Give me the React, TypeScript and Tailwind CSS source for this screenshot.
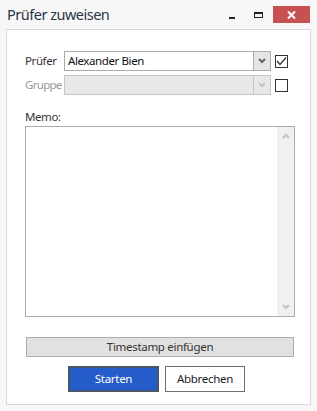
const font = { fontFamily: '"Noto Sans", "Open Sans", sans-serif' }

function Chevron({ up, color }: { up?: boolean; color: string }) {
  return (
    <svg width="8" height="6" viewBox="0 0 8 6" className="block">
      <path
        d={up ? 'M1 5 L4 2 L7 5' : 'M1 1 L4 4 L7 1'}
        stroke={color}
        strokeWidth="2"
        fill="none"
      />
    </svg>
  )
}

function Combo({ value, disabled }: { value?: string; disabled?: boolean }) {
  return (
    <div
      className={`flex h-[20px] w-[207px] border ${
        disabled ? 'border-[#c7c7c7] bg-[#e8e8e8]' : 'border-[#ababab] bg-white'
      }`}
    >
      <div className="flex flex-1 items-center pl-[3px] text-[11.5px] leading-none tracking-[-0.4px] text-[#111]">
        {value}
      </div>
      <div
        className={`flex w-[17px] items-center justify-center border-l ${
          disabled ? 'border-[#c7c7c7] bg-[#e8e8e8]' : 'border-[#ababab] bg-[#e5e5e5]'
        }`}
      >
        <Chevron color={disabled ? '#c4c4c4' : '#666'} />
      </div>
    </div>
  )
}

function CheckBox({ checked }: { checked?: boolean }) {
  return (
    <div className="flex h-[13px] w-[13px] items-center justify-center border border-[#333] bg-white">
      {checked && (
        <svg width="11" height="11" viewBox="0 0 11 11">
          <path d="M1 5 L4 8.5 L10 1.5" stroke="#333" strokeWidth="1.3" fill="none" />
        </svg>
      )}
    </div>
  )
}

export default function App() {
  return (
    <div className="flex h-[411px] w-[317px] flex-col bg-[#f7f7f7]" style={font}>
      <div className="flex h-[29px] items-start">
        <div className="pl-[7px] pt-[4px] text-[14.5px] leading-[20px] tracking-[-0.5px] text-[#2b3646]">
          Prüfer zuweisen
        </div>
        <div className="ml-auto flex items-start pt-[6px] pr-[7px]">
          <div className="mt-[11px] h-[2px] w-[6px] bg-[#222]" />
          <div className="ml-[19px] mt-[6px] h-[6px] w-[9px] border border-t-2 border-[#222]" />
          <div className="ml-[10px] flex h-[17px] w-[37px] items-center justify-center bg-[#c75050]">
            <svg width="9" height="8" viewBox="0 0 9 8">
              <path d="M1 0.5 L8 7.5 M8 0.5 L1 7.5" stroke="white" strokeWidth="2" />
            </svg>
          </div>
        </div>
      </div>

      <div className="ml-[6px] flex h-[376px] w-[305px] flex-col border border-[#d9d9d9] bg-white">
        <div className="flex flex-col gap-[4px] pl-[18px] pt-[21px]">
          <div className="flex items-center">
            <div className="w-[39px] shrink-0 text-[11.5px] tracking-[-0.4px] text-[#333]">Prüfer</div>
            <Combo value="Alexander Bien" />
            <div className="ml-[4px]">
              <CheckBox checked />
            </div>
          </div>
          <div className="flex items-center">
            <div className="w-[39px] shrink-0 text-[11.5px] tracking-[-0.7px] text-[#9a9a9a]">Gruppe</div>
            <Combo disabled />
            <div className="ml-[4px]">
              <CheckBox />
            </div>
          </div>
        </div>

        <div className="pl-[18px] pt-[14px] text-[11.5px] leading-[16px] tracking-[-0.4px] text-[#333]">Memo:</div>
        <div className="ml-[18px] mt-[1px] flex h-[191px] w-[270px] border border-[#ababab] bg-white">
          <div className="flex-1" />
          <div className="flex w-[17px] flex-col items-center justify-between bg-[#f0f0f0] py-[6px]">
            <Chevron up color="#c2c2c2" />
            <Chevron color="#c2c2c2" />
          </div>
        </div>

        <div className="ml-[19px] mt-[20px] flex h-[20px] w-[268px] items-center justify-center border border-[#adadad] bg-[#e1e1e1] text-[11.5px] tracking-[-0.3px] text-[#333]">
          Timestamp einfügen
        </div>

        <div className="mt-[9px] flex gap-[6px] pl-[61px]">
          <div className="flex h-[26px] w-[91px] items-center justify-center border-2 border-[#4a5567] bg-[#245cc9] text-[11.5px] tracking-[-0.3px] text-white">
            Starten
          </div>
          <div className="flex h-[26px] w-[80px] items-center justify-center border border-[#707070] bg-white text-[11.5px] tracking-[-0.3px] text-[#222]">
            Abbrechen
          </div>
        </div>
      </div>
    </div>
  )
}
